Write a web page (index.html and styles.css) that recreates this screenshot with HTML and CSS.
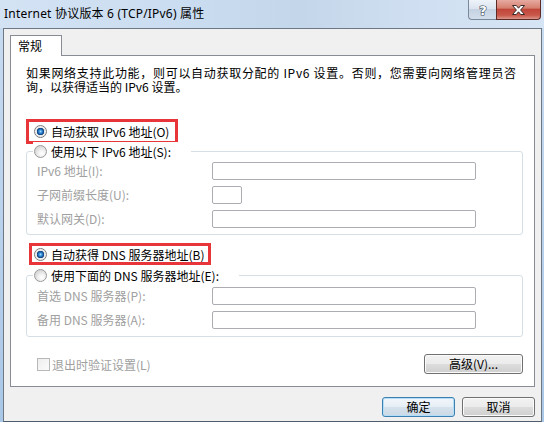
FILE: index.html
```html
<!DOCTYPE html>
<html lang="zh-CN">
<head>
<meta charset="utf-8">
<title>Internet 协议版本 6 (TCP/IPv6) 属性</title>
<link rel="stylesheet" href="styles.css">
</head>
<body>
<div class="window">
  <div class="titlebar">
    <span class="title">Internet 协议版本 6 (TCP/IPv6) 属性</span>
    <div class="caption-btns">
      <div class="cap help">
        <svg width="12" height="15" viewBox="0 0 12 15"><text x="6" y="12.5" text-anchor="middle" class="help-glyph">?</text></svg>
      </div>
      <div class="cap close">
        <svg width="15" height="12" viewBox="0 0 15 12"><path class="x-glyph" d="M1.5 1.5H5.3L7.5 4.2L9.7 1.5H13.5L9.6 6L13.5 10.5H9.7L7.5 7.8L5.3 10.5H1.5L5.4 6Z"/></svg>
      </div>
    </div>
  </div>
  <div class="client">
    <div class="tabs"><div class="tab">常规</div></div>
    <div class="panel">
      <p class="intro"><span class="intro-wide">如果网络支持此功能，则可以自动获取分配的 IPv6 设置。否则，您需要向网络管理员咨</span><br>询，以获得适当的 IPv6 设置。</p>

      <div class="mark mark-a">
        <div class="radio"><span class="radio-dot on"></span>自动获取 IPv6 地址(O)</div>
      </div>

      <div class="group group-a">
        <div class="group-title radio"><span class="radio-dot"></span>使用以下 IPv6 地址(S):</div>
        <div class="fields">
          <span class="field-label">IPv6 地址(I):</span><span class="input wide"></span>
          <span class="field-label">子网前缀长度(U):</span><span class="input small"></span>
          <span class="field-label">默认网关(D):</span><span class="input wide"></span>
        </div>
      </div>

      <div class="mark mark-b">
        <div class="radio"><span class="radio-dot on"></span>自动获得 DNS 服务器地址(B)</div>
      </div>

      <div class="group group-b">
        <div class="group-title radio"><span class="radio-dot"></span>使用下面的 DNS 服务器地址(E):</div>
        <div class="fields">
          <span class="field-label">首选 DNS 服务器(P):</span><span class="input wide"></span>
          <span class="field-label">备用 DNS 服务器(A):</span><span class="input wide"></span>
        </div>
      </div>

      <div class="options-row">
        <div class="check"><span class="checkbox"></span>退出时验证设置(L)</div>
        <div class="btn advanced">高级(V)...</div>
      </div>
    </div>
    <div class="footer">
      <div class="btn default">确定</div>
      <div class="btn">取消</div>
    </div>
  </div>
</div>
</body>
</html>
```

FILE: styles.css
```css
* { box-sizing: border-box; }
html, body { margin: 0; padding: 0; }
body {
  width: 544px;
  height: 422px;
  overflow: hidden;
  font-family: "Noto Sans CJK SC", sans-serif;
  font-size: 12px;
  color: #000;
}

.window {
  width: 544px;
  height: 422px;
  display: flex;
  flex-direction: column;
  background: linear-gradient(to bottom, #c9dcf1 0, #b7d0eb 60%, #a9c7e6 100%);
}

/* ---------- title bar ---------- */
.titlebar {
  flex: none;
  height: 28px;
  display: flex;
  align-items: flex-start;
  background: linear-gradient(90deg, #d3e3f4 0, #cadcf0 35%, #c4d6ea 55%, #cfdff1 75%, #d6e5f5 100%);
}
.title {
  font-family: "Noto Sans", "Noto Sans CJK SC", sans-serif;
  font-size: 12px;
  line-height: 16px;
  letter-spacing: 0.2px;
  padding: 6px 0 0 4px;
  white-space: nowrap;
}
.caption-btns {
  margin-left: auto;
  margin-right: 3px;
  display: flex;
}
.cap {
  height: 20px;
  display: flex;
  align-items: center;
  justify-content: center;
}
.help {
  width: 28px;
  border: 1px solid #7a889b;
  border-top: none;
  border-right: none;
  border-radius: 0 0 0 4px;
  background: linear-gradient(#eef3f9 0, #dbe4ef 45%, #c4d2e2 50%, #d3deeb 100%);
}
.close {
  width: 45px;
  border: 1px solid #5e2a26;
  border-top: none;
  border-radius: 0 0 4px 0;
  background: linear-gradient(#e7aaa1 0, #d5806f 42%, #c1463a 50%, #c9584b 80%, #dc958a 100%);
}
.help-glyph {
  font-family: "DejaVu Sans", sans-serif;
  font-size: 13px;
  font-weight: bold;
  fill: #ffffff;
  stroke: #3f4b5c;
  stroke-width: 1.2px;
  paint-order: stroke;
}
.x-glyph {
  fill: #ffffff;
  stroke: #3a2b2a;
  stroke-width: 1;
  stroke-linejoin: round;
}

/* ---------- client area ---------- */
.client {
  flex: 1;
  margin: 0 2px 0 3px;
  border: 1px solid #6e7884;
  border-bottom-color: #4f5c69;
  background: #f0f0f0;
  padding: 6px 6px 0 6px;
  display: flex;
  flex-direction: column;
}
.tabs {
  display: flex;
  height: 20px;
}
.tab {
  position: relative;
  z-index: 1;
  width: 52px;
  height: 21px;
  border: 1px solid #898c95;
  border-bottom: none;
  background: #fff;
  padding-left: 7px;
  line-height: 19px;
}
.panel {
  flex: none;
  height: 332px;
  border: 1px solid #898c95;
  background: #fff;
  padding: 0 11px 0 15px;
}
.intro {
  margin: 10px 0 0;
  line-height: 14px;
  white-space: nowrap;
}
.intro-wide { letter-spacing: 0.7px; }

/* ---------- radios ---------- */
.radio {
  display: flex;
  align-items: center;
  gap: 4px;
  height: 19px;
  white-space: nowrap;
}
.radio-dot {
  flex: none;
  width: 13px;
  height: 13px;
  border-radius: 50%;
  border: 1px solid #9a9a9a;
  background: radial-gradient(circle at 62% 68%, #ffffff 0, #f3f3f3 3px, #d9d9d9 7px);
}
.radio-dot.on {
  border-color: #7c7c7c;
  background: radial-gradient(circle at 50% 50%, #a6dcfb 0, #3d95de 1.4px, #16589e 2.8px, #0e3f75 3.5px, #e7e7e7 3.9px, #f6f6f6 6px);
}

.mark {
  width: max-content;
  border: 3px solid #e8353a;
}
.mark-a {
  margin-top: 25px;
  padding: 0 6px 0 5px;
}
.mark-b {
  margin: 8px 0 0 3px;
  padding: 0 4px 0 2px;
}
.mark-b .radio { height: 16px; }

/* ---------- group boxes ---------- */
.group {
  border: 1px solid #d5dfe5;
  border-radius: 3px;
  padding: 0 0 6px 10px;
}
.group-a { margin-top: 7px; }
.group-b { margin-top: 10px; padding-bottom: 7px; }
.group-title {
  width: max-content;
  margin: -10px 0 0 -4px;
  padding: 0 20px 0 1px;
  background: #fff;
}
.fields {
  margin-top: 1px;
  display: grid;
  grid-template-columns: 175px max-content;
  row-gap: 6px;
  align-items: center;
}
.group-b .fields { margin-top: 2px; }
.field-label {
  color: #a0a0a0;
  white-space: nowrap;
  line-height: 18px;
}
.input {
  display: block;
  height: 18px;
  border: 1px solid #abadb3;
  border-radius: 2px;
  background: #fff;
}
.input.wide { width: 264px; }
.input.small { width: 30px; }

/* ---------- bottom row ---------- */
.options-row {
  margin-top: 17px;
  display: flex;
  justify-content: space-between;
  align-items: center;
}
.check {
  display: flex;
  align-items: center;
  gap: 2px;
  margin-left: 11px;
  color: #a0a0a0;
}
.checkbox {
  width: 13px;
  height: 13px;
  border: 1px solid #b8b8b8;
  background: linear-gradient(135deg, #eeeeee, #fbfbfb);
}

.btn {
  height: 20px;
  width: 73px;
  border: 1px solid #707070;
  border-radius: 3px;
  background: linear-gradient(#f2f2f2 0, #ebebeb 50%, #dddddd 50%, #cfcfcf 100%);
  box-shadow: inset 0 0 0 1px #fbfbfb;
  display: flex;
  align-items: center;
  justify-content: center;
  line-height: 18px;
  white-space: nowrap;
}
.btn.advanced { width: 99px; }
.btn.default {
  border-color: #3c7fb1;
  box-shadow: inset 0 0 0 1px #b4def7;
  background: linear-gradient(#f1f6fa 0, #e6eef5 50%, #d6e2ec 50%, #cbd9e6 100%);
}
.footer {
  margin-top: 10px;
  display: flex;
  justify-content: flex-end;
  gap: 7px;
}
```
